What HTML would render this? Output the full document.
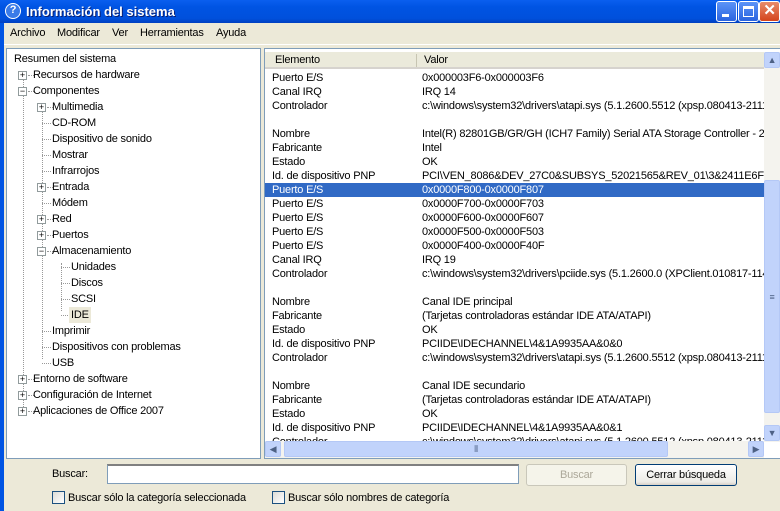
<!DOCTYPE html>
<html><head><meta charset="utf-8"><style>
*{margin:0;padding:0;box-sizing:border-box}
body{width:780px;height:511px;overflow:hidden;background:#ECE9D8;font-family:"Liberation Sans",sans-serif;font-size:11px;color:#000;position:relative;letter-spacing:-0.2px}
.abs{position:absolute}
#title{left:0;top:0;width:780px;height:23px;background:linear-gradient(#0A5FEF,#0054E3 30%,#0050DC 80%,#003FC0);}
#title .t{left:26px;top:4px;color:#fff;font-weight:bold;font-size:13px;text-shadow:1px 1px #0A1E6E;letter-spacing:0}
#help{left:5px;top:3px;width:16px;height:16px;border-radius:50%;background:#3A7BE8;border:1.5px solid #fff;color:#fff;font-weight:bold;font-size:11px;text-align:center;line-height:13px}
.wb{top:1px;width:21px;height:21px;border:1px solid #fff;border-radius:3px;background:linear-gradient(#5C94F7,#2A64E0)}
#lb{left:0;top:23px;width:4px;height:488px;background:#0054E3}
#menu{left:4px;top:23px;height:20px;width:776px}
#menu span{position:absolute;top:4px}
#left{left:6px;top:48px;width:255px;height:411px;background:#fff;border:1px solid #7F9DB9}
.tr{position:absolute;height:16px;line-height:16px;white-space:nowrap}
.bx{position:absolute;width:9px;height:9px;border:1px solid #919B9C;background:#fff;font-size:9px;line-height:7px;text-align:center;color:#000;letter-spacing:0}
.dl{position:absolute;border-top:1px dotted #999;width:6px}
.vl{position:absolute;border-left:1px dotted #999}
#right{left:264px;top:48px;width:516px;height:411px;background:#fff;border:1px solid #7F9DB9;border-right:none;overflow:hidden}
#hdr{left:0;top:3px;width:500px;height:17px;background:#EBEADB;border-bottom:2px solid #D6D3CE}
.row{position:absolute;left:0;width:499px;height:14px;line-height:14px;white-space:nowrap}
.row .a{position:absolute;left:7px}
.row .b{position:absolute;left:157px}
.sel{background:#316AC5;color:#fff}
#vs{left:499px;top:3px;width:16px;height:390px;background:#F4F3EE}
.sb{position:absolute;width:16px;height:16px;background:#C1D3FB;border:1px solid #B4C8F6;border-radius:2px;color:#4D6185;font-size:9px;text-align:center;line-height:14px}
#hs{left:0;top:392px;width:499px;height:17px;background:#F4F3EE}
.btn{position:absolute;height:22px;border:1px solid #003C74;border-radius:3px;background:linear-gradient(#fff,#ECEBE6 85%,#D6D0C5);text-align:center;line-height:20px}
.cb{position:absolute;width:13px;height:13px;border:1px solid #1C5180;background:linear-gradient(135deg,#DCDCD7,#fff)}
</style></head><body>
<div id="title" class="abs"><div id="help" class="abs">?</div><div class="t abs">Información del sistema</div>
<div class="wb abs" style="left:716px"><div class="abs" style="left:5px;top:12px;width:7px;height:3px;background:#fff"></div></div>
<div class="wb abs" style="left:738px"><div class="abs" style="left:4px;top:4px;width:11px;height:11px;border:1px solid #fff;border-top-width:3px"></div></div>
<div class="wb abs" style="left:759px;width:21px;background:linear-gradient(#E88C6C,#D5441C);color:#fff;font-weight:bold;font-size:15px;text-align:center;line-height:18px">✕</div>
</div>
<div id="lb" class="abs"></div>
<div id="menu" class="abs"><span style="left:6px">Archivo</span><span style="left:53px">Modificar</span><span style="left:108px">Ver</span><span style="left:136px">Herramientas</span><span style="left:212px">Ayuda</span></div>
<div class="abs" style="left:4px;top:44px;width:776px;height:1px;background:#fff"></div>

<div id="left" class="abs">
<div class="tr" style="left:7px;top:2px">Resumen del sistema</div>
<div class="vl" style="left:16px;top:22px;height:336px"></div>
<div class="vl" style="left:35px;top:54px;height:256px"></div>
<div class="vl" style="left:54px;top:214px;height:48px"></div>
<div class="bx" style="left:11px;top:22px">+</div><div class="dl" style="left:21px;top:26px"></div><div class="tr" style="left:26px;top:18px">Recursos de hardware</div>
<div class="bx" style="left:11px;top:38px">−</div><div class="dl" style="left:21px;top:42px"></div><div class="tr" style="left:26px;top:34px">Componentes</div>
<div class="bx" style="left:30px;top:54px">+</div><div class="dl" style="left:40px;top:58px"></div><div class="tr" style="left:45px;top:50px">Multimedia</div>
<div class="dl" style="left:35px;top:74px;width:9px"></div><div class="tr" style="left:45px;top:66px">CD-ROM</div>
<div class="dl" style="left:35px;top:90px;width:9px"></div><div class="tr" style="left:45px;top:82px">Dispositivo de sonido</div>
<div class="dl" style="left:35px;top:106px;width:9px"></div><div class="tr" style="left:45px;top:98px">Mostrar</div>
<div class="dl" style="left:35px;top:122px;width:9px"></div><div class="tr" style="left:45px;top:114px">Infrarrojos</div>
<div class="bx" style="left:30px;top:134px">+</div><div class="dl" style="left:40px;top:138px"></div><div class="tr" style="left:45px;top:130px">Entrada</div>
<div class="dl" style="left:35px;top:154px;width:9px"></div><div class="tr" style="left:45px;top:146px">Módem</div>
<div class="bx" style="left:30px;top:166px">+</div><div class="dl" style="left:40px;top:170px"></div><div class="tr" style="left:45px;top:162px">Red</div>
<div class="bx" style="left:30px;top:182px">+</div><div class="dl" style="left:40px;top:186px"></div><div class="tr" style="left:45px;top:178px">Puertos</div>
<div class="bx" style="left:30px;top:198px">−</div><div class="dl" style="left:40px;top:202px"></div><div class="tr" style="left:45px;top:194px">Almacenamiento</div>
<div class="dl" style="left:54px;top:218px;width:9px"></div><div class="tr" style="left:64px;top:210px">Unidades</div>
<div class="dl" style="left:54px;top:234px;width:9px"></div><div class="tr" style="left:64px;top:226px">Discos</div>
<div class="dl" style="left:54px;top:250px;width:9px"></div><div class="tr" style="left:64px;top:242px">SCSI</div>
<div class="dl" style="left:54px;top:266px;width:9px"></div><div class="tr" style="left:62px;top:258px;padding:0 2px;background:#ECE9D8">IDE</div>
<div class="dl" style="left:35px;top:282px;width:9px"></div><div class="tr" style="left:45px;top:274px">Imprimir</div>
<div class="dl" style="left:35px;top:298px;width:9px"></div><div class="tr" style="left:45px;top:290px">Dispositivos con problemas</div>
<div class="dl" style="left:35px;top:314px;width:9px"></div><div class="tr" style="left:45px;top:306px">USB</div>
<div class="bx" style="left:11px;top:326px">+</div><div class="dl" style="left:21px;top:330px"></div><div class="tr" style="left:26px;top:322px">Entorno de software</div>
<div class="bx" style="left:11px;top:342px">+</div><div class="dl" style="left:21px;top:346px"></div><div class="tr" style="left:26px;top:338px">Configuración de Internet</div>
<div class="bx" style="left:11px;top:358px">+</div><div class="dl" style="left:21px;top:362px"></div><div class="tr" style="left:26px;top:354px">Aplicaciones de Office 2007</div>
</div>

<div id="right" class="abs">
<div id="hdr" class="abs"><span class="abs" style="left:10px;top:2px">Elemento</span><div class="abs" style="left:151px;top:2px;width:1px;height:13px;background:#C7C5B2"></div><span class="abs" style="left:159px;top:2px">Valor</span></div>
<div class="abs" style="left:0;top:22px;width:499px;height:370px;overflow:hidden">
<div class="row" style="top:0"><span class="a">Puerto E/S</span><span class="b">0x000003F6-0x000003F6</span></div>
<div class="row" style="top:14px"><span class="a">Canal IRQ</span><span class="b">IRQ 14</span></div>
<div class="row" style="top:28px"><span class="a">Controlador</span><span class="b">c:\windows\system32\drivers\atapi.sys (5.1.2600.5512 (xpsp.080413-2111))</span></div>
<div class="row" style="top:56px"><span class="a">Nombre</span><span class="b">Intel(R) 82801GB/GR/GH (ICH7 Family) Serial ATA Storage Controller - 27C0</span></div>
<div class="row" style="top:70px"><span class="a">Fabricante</span><span class="b">Intel</span></div>
<div class="row" style="top:84px"><span class="a">Estado</span><span class="b">OK</span></div>
<div class="row" style="top:98px"><span class="a">Id. de dispositivo PNP</span><span class="b">PCI\VEN_8086&amp;DEV_27C0&amp;SUBSYS_52021565&amp;REV_01\3&amp;2411E6FE</span></div>
<div class="row sel" style="top:112px"><span class="a">Puerto E/S</span><span class="b">0x0000F800-0x0000F807</span></div>
<div class="row" style="top:126px"><span class="a">Puerto E/S</span><span class="b">0x0000F700-0x0000F703</span></div>
<div class="row" style="top:140px"><span class="a">Puerto E/S</span><span class="b">0x0000F600-0x0000F607</span></div>
<div class="row" style="top:154px"><span class="a">Puerto E/S</span><span class="b">0x0000F500-0x0000F503</span></div>
<div class="row" style="top:168px"><span class="a">Puerto E/S</span><span class="b">0x0000F400-0x0000F40F</span></div>
<div class="row" style="top:182px"><span class="a">Canal IRQ</span><span class="b">IRQ 19</span></div>
<div class="row" style="top:196px"><span class="a">Controlador</span><span class="b">c:\windows\system32\drivers\pciide.sys (5.1.2600.0 (XPClient.010817-1148))</span></div>
<div class="row" style="top:224px"><span class="a">Nombre</span><span class="b">Canal IDE principal</span></div>
<div class="row" style="top:238px"><span class="a">Fabricante</span><span class="b">(Tarjetas controladoras estándar IDE ATA/ATAPI)</span></div>
<div class="row" style="top:252px"><span class="a">Estado</span><span class="b">OK</span></div>
<div class="row" style="top:266px"><span class="a">Id. de dispositivo PNP</span><span class="b">PCIIDE\IDECHANNEL\4&amp;1A9935AA&amp;0&amp;0</span></div>
<div class="row" style="top:280px"><span class="a">Controlador</span><span class="b">c:\windows\system32\drivers\atapi.sys (5.1.2600.5512 (xpsp.080413-2111))</span></div>
<div class="row" style="top:308px"><span class="a">Nombre</span><span class="b">Canal IDE secundario</span></div>
<div class="row" style="top:322px"><span class="a">Fabricante</span><span class="b">(Tarjetas controladoras estándar IDE ATA/ATAPI)</span></div>
<div class="row" style="top:336px"><span class="a">Estado</span><span class="b">OK</span></div>
<div class="row" style="top:350px"><span class="a">Id. de dispositivo PNP</span><span class="b">PCIIDE\IDECHANNEL\4&amp;1A9935AA&amp;0&amp;1</span></div>
<div class="row" style="top:364px"><span class="a">Controlador</span><span class="b">c:\windows\system32\drivers\atapi.sys (5.1.2600.5512 (xpsp.080413-2111))</span></div>
</div>
<div id="vs" class="abs">
<div class="sb" style="left:0;top:0">▲</div>
<div class="sb" style="left:0;top:128px;height:233px;line-height:233px">≡</div>
<div class="sb" style="left:0;top:373px">▼</div>
</div>
<div id="hs" class="abs">
<div class="sb" style="left:0;top:0">◀</div>
<div class="sb" style="left:19px;top:0;width:384px;line-height:14px">⦀</div>
<div class="sb" style="left:483px;top:0">▶</div>
</div>
</div>

<div class="abs" style="left:52px;top:468px">Buscar:</div>
<div class="abs" style="left:107px;top:464px;width:412px;height:20px;background:#fff;border:1px solid #7F9DB9;border-top:2px solid #808080"></div>
<div class="btn" style="left:526px;top:464px;width:101px;border-color:#C9C7BA;background:#F5F4EA;color:#ACA899">Buscar</div>
<div class="btn" style="left:635px;top:464px;width:102px">Cerrar búsqueda</div>
<div class="cb" style="left:52px;top:491px"></div><div class="abs" style="left:68px;top:492px">Buscar sólo la categoría seleccionada</div>
<div class="cb" style="left:272px;top:491px"></div><div class="abs" style="left:288px;top:492px">Buscar sólo nombres de categoría</div>
</body></html>
